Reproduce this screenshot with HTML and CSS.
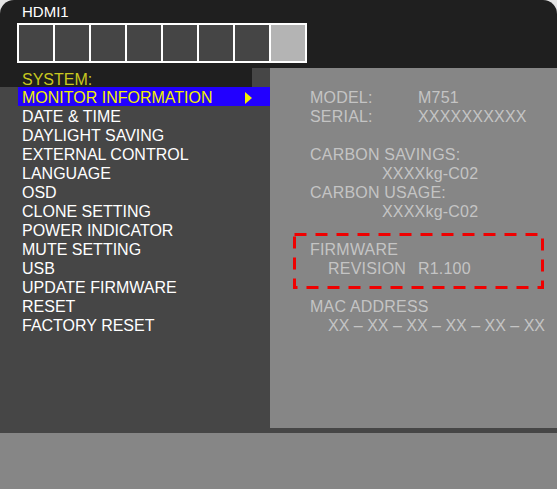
FILE: index.html
```html
<!DOCTYPE html>
<html lang="en">
<head>
    <meta charset="UTF-8">
    <title>HDMI1 - Monitor Information</title>
    <link rel="stylesheet" href="styles.css">
</head>
<body>
    <div class="osd">
        <!-- top bar: input name and level blocks -->
        <div class="header">
            <div class="input-name">HDMI1</div>
            <div class="level-bar">
                <div class="cell"></div>
                <div class="cell"></div>
                <div class="cell"></div>
                <div class="cell"></div>
                <div class="cell"></div>
                <div class="cell"></div>
                <div class="cell"></div>
                <div class="cell on"></div>
            </div>
        </div>

        <div class="main">
            <!-- menu -->
            <div class="menu">
                <div class="system">SYSTEM:</div>
                <div class="menu-list">
                    <div class="menu-item active">MONITOR INFORMATION <span class="arrow"></span></div>
                    <div class="menu-item">DATE &amp; TIME</div>
                    <div class="menu-item">DAYLIGHT SAVING</div>
                    <div class="menu-item">EXTERNAL CONTROL</div>
                    <div class="menu-item">LANGUAGE</div>
                    <div class="menu-item">OSD</div>
                    <div class="menu-item">CLONE SETTING</div>
                    <div class="menu-item">POWER INDICATOR</div>
                    <div class="menu-item">MUTE SETTING</div>
                    <div class="menu-item">USB</div>
                    <div class="menu-item">UPDATE FIRMWARE</div>
                    <div class="menu-item">RESET</div>
                    <div class="menu-item">FACTORY RESET</div>
                </div>
            </div>

            <!-- info panel -->
            <div class="info">
                <div class="row"><span class="label">MODEL:</span><span>M751</span></div>
                <div class="row"><span class="label">SERIAL:</span><span>XXXXXXXXXX</span></div>
                <div class="row"></div>
                <div class="row">CARBON SAVINGS:</div>
                <div class="row value">XXXXkg-C02</div>
                <div class="row">CARBON USAGE:</div>
                <div class="row value">XXXXkg-C02</div>
                <div class="row"></div>
                <div class="row">FIRMWARE</div>
                <div class="row sub"><span class="label short">REVISION</span><span>R1.100</span></div>
                <div class="row"></div>
                <div class="row">MAC ADDRESS</div>
                <div class="row sub mac">XX – XX – XX – XX – XX – XX</div>

                <svg class="highlight" width="251" height="56" viewBox="0 0 251 56">
                    <rect x="1.5" y="1.5" width="248" height="53" fill="none" stroke="#f00000" stroke-width="3" stroke-dasharray="12 9"/>
                </svg>
            </div>
        </div>

        <div class="footer"></div>
    </div>
</body>
</html>
```

FILE: styles.css
```css
body {
    margin: 0;
    padding: 0;
    background-color: #e4e4e4;
    font-family: "Liberation Sans", Arial, sans-serif;
}
.osd {
    width: 557px;
    height: 489px;
    overflow: hidden;
}

/* top bar */
.header {
    height: 68px;
    background-color: #1f1f1f;
    border-radius: 14px 14px 0 0;
    padding-left: 17px;
    box-sizing: border-box;
}
.input-name {
    height: 23px;
    padding-left: 5px;
    font-size: 15px;
    line-height: 23px;
    color: #ffffff;
}
.level-bar {
    width: 290px;
    height: 40px;
    box-sizing: border-box;
    padding: 2px;
    background-color: #ffffff;
    display: grid;
    grid-template-columns: repeat(8, 1fr);
    gap: 2px;
}
.cell {
    background-color: #454545;
}
.cell.on {
    background-color: #b4b4b4;
}

/* main area */
.main {
    height: 365px;
    background-color: #464646;
    display: flex;
}
.menu {
    width: 270px;
    font-size: 16px;
    color: #ffffff;
}
.system {
    width: 252px;
    height: 19px;
    box-sizing: border-box;
    padding-left: 22px;
    line-height: 23px;
    background-color: #1f1f1f;
    color: #c8c820;
}
.menu-list {
    padding-left: 18px;
}
.menu-item {
    position: relative;
    height: 19px;
    line-height: 21px;
    padding-left: 4px;
    white-space: nowrap;
}
.menu-item.active {
    background-color: #2200ff;
    color: #f0f000;
}
.arrow {
    position: absolute;
    left: 227px;
    top: 5px;
    width: 0;
    height: 0;
    border-left: 7px solid #f0f000;
    border-top: 6px solid transparent;
    border-bottom: 6px solid transparent;
}

/* info panel */
.info {
    position: relative;
    width: 287px;
    height: 360px;
    box-sizing: border-box;
    padding: 19px 0 0 40px;
    background-color: #868686;
    color: #c4c4c4;
    font-size: 16px;
    letter-spacing: 0.2px;
}
.row {
    height: 19px;
    line-height: 21px;
    display: flex;
    white-space: nowrap;
}
.label {
    width: 108px;
}
.label.short {
    width: 90px;
}
.value {
    padding-left: 72px;
}
.sub {
    padding-left: 18px;
}
.mac {
    letter-spacing: 0;
}
.highlight {
    position: absolute;
    left: 23px;
    top: 165px;
}

.footer {
    height: 56px;
    background-color: #868686;
}
```
